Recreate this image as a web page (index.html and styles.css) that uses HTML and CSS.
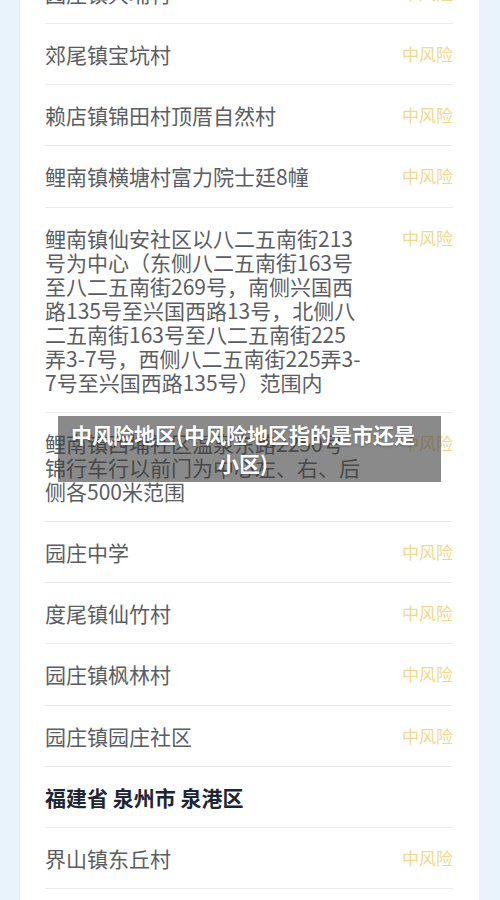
FILE: index.html
```html
<!DOCTYPE html>
<html lang="zh-CN">
<head>
  <meta charset="UTF-8">
  <title>中风险地区</title>
  <link rel="stylesheet" href="styles.css">
</head>
<body>

<div class="page">
  <div class="card">
    <div class="row"><span class="name">园庄镇大埔村</span><span class="risk">中风险</span></div>
    <div class="row"><span class="name">郊尾镇宝坑村</span><span class="risk">中风险</span></div>
    <div class="row"><span class="name">赖店镇锦田村顶厝自然村</span><span class="risk">中风险</span></div>
    <div class="row"><span class="name">鲤南镇横塘村富力院士廷8幢</span><span class="risk">中风险</span></div>
    <div class="row"><span class="name">鲤南镇仙安社区以八二五南街213号为中心（东侧八二五南街163号至八二五南街269号，南侧兴国西路135号至兴国西路13号，北侧八二五南街163号至八二五南街225弄3-7号，西侧八二五南街225弄3-7号至兴国西路135号）范围内</span><span class="risk">中风险</span></div>
    <div class="row"><span class="name">鲤南镇西埔社区温泉东路2250号锦行车行以前门为中心左、右、后侧各500米范围</span><span class="risk">中风险</span></div>
    <div class="row"><span class="name">园庄中学</span><span class="risk">中风险</span></div>
    <div class="row"><span class="name">度尾镇仙竹村</span><span class="risk">中风险</span></div>
    <div class="row"><span class="name">园庄镇枫林村</span><span class="risk">中风险</span></div>
    <div class="row"><span class="name">园庄镇园庄社区</span><span class="risk">中风险</span></div>
    <div class="row head"><span class="name">福建省 泉州市 泉港区</span></div>
    <div class="row"><span class="name">界山镇东丘村</span><span class="risk">中风险</span></div>
  </div>
</div>

<!-- 图片上的标题水印 -->
<div class="caption">中风险地区(中风险地区指的是市还是小区)</div>

</body>
</html>
```

FILE: styles.css
```css
body {
  margin: 0;
  background: #e9f3fc;
  font-family: "Noto Sans CJK SC", "Noto Sans", sans-serif;
  overflow: hidden;
}

.page {
  padding: 0 21px 0 20px;
}

.card {
  background: #fff;
  margin-top: -37.2px;
  padding: 0 26px 60px 25px;
}

.row {
  display: flex;
  gap: 40px;
  padding: 18.1px 0;
  border-bottom: 1px solid #ececec;
}

.name {
  flex: 1;
  font-size: 21px;
  line-height: 24px;
  color: #5a5e63;
  word-break: break-all;
}

.risk {
  width: 51px;
  font-size: 17px;
  line-height: 24px;
  color: #f2d78c;
  text-align: right;
  white-space: nowrap;
}

.head .name {
  font-weight: bold;
  color: #1e2636;
}

/* 半透明标题 */
.caption {
  position: absolute;
  left: 58px;
  top: 416px;
  width: 350px;
  padding: 4px 23px 4px 10px;
  background: rgba(60, 60, 60, 0.6);
  color: #fff;
  font-size: 21px;
  font-weight: bold;
  line-height: 29px;
  text-align: center;
  text-shadow: 0 1px 2px rgba(0, 0, 0, 0.3);
}
```
